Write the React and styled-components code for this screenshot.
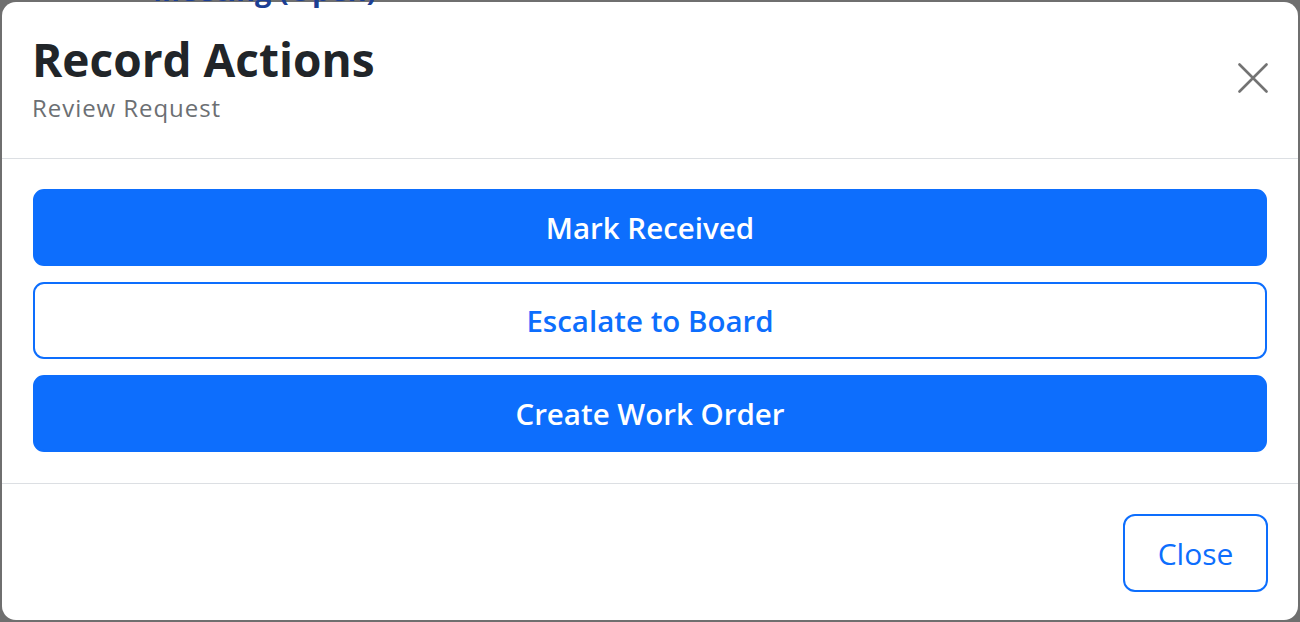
import React from "react";
import styled, { createGlobalStyle } from "styled-components";

const Global = createGlobalStyle`
  html, body { margin: 0; padding: 0; }
  body {
    font-family: "Open Sans", "Noto Sans", sans-serif;
    background: #6f6f6f;
    overflow: hidden;
  }
  * { box-sizing: border-box; }
`;

const Backdrop = styled.div`
  position: relative;
  width: 1300px;
  height: 622px;
  padding: 2px;
  background: #6f6f6f;
`;

const Behind = styled.div`
  position: absolute;
  top: -30px;
  left: 153px;
  font-size: 29px;
  font-weight: 700;
  color: #1c3f94;
  z-index: 2;
  white-space: nowrap;
`;

const Modal = styled.div`
  height: 618px;
  background: #fff;
  border-radius: 14px;
  display: flex;
  flex-direction: column;
  overflow: hidden;
`;

const Header = styled.div`
  height: 157px;
  padding: 29.5px 30px 0 30px;
  border-bottom: 1px solid #dcdfe3;
  display: flex;
  align-items: flex-start;
  justify-content: space-between;
`;

const Titles = styled.div`
  display: flex;
  flex-direction: column;
`;

const Title = styled.h1`
  margin: 0;
  font-size: 46px;
  line-height: 55.2px;
  font-weight: 700;
  color: #212529;
`;

const Subtitle = styled.div`
  font-size: 24px;
  line-height: 30px;
  letter-spacing: 0.95px;
  color: #6c6f73;
  margin-top: 6px;
`;

const CloseX = styled.button`
  border: none;
  background: transparent;
  padding: 0;
  width: 30px;
  height: 30px;
  margin-top: 31.5px;
  display: flex;
  cursor: pointer;
`;

const Body = styled.div`
  padding: 30px 31px 31px 31px;
  border-bottom: 1px solid #dcdfe3;
  display: flex;
  flex-direction: column;
  gap: 16px;
`;

const ActionButton = styled.button`
  height: 77px;
  width: 100%;
  border-radius: 11px;
  border: 2px solid #0d6efd;
  background: ${(p) => (p.$outline ? "#fff" : "#0d6efd")};
  color: ${(p) => (p.$outline ? "#0d6efd" : "#fff")};
  font-family: "Open Sans", sans-serif;
  font-size: 29.5px;
  font-weight: 600;
  cursor: pointer;
`;

const Footer = styled.div`
  flex: 1;
  padding: 30px 30px 0 30px;
  display: flex;
  justify-content: flex-end;
  align-items: flex-start;
`;

const CloseButton = styled.button`
  width: 145px;
  height: 78px;
  border-radius: 12px;
  border: 2px solid #0d6efd;
  background: #fff;
  color: #0d6efd;
  font-family: "Open Sans", sans-serif;
  font-size: 30px;
  font-weight: 400;
  cursor: pointer;
`;

export default function App() {
  return (
    <>
      <Global />
      <Backdrop>
        <Behind>Meeting (Open)</Behind>
        <Modal>
          <Header>
            <Titles>
              <Title>Record Actions</Title>
              <Subtitle>Review Request</Subtitle>
            </Titles>
            <CloseX aria-label="Close">
              <svg width="30" height="30" viewBox="0 0 30 30">
                <path
                  d="M1.5 1.5 L28.5 28.5 M28.5 1.5 L1.5 28.5"
                  stroke="#737373"
                  strokeWidth="2.6"
                  strokeLinecap="round"
                  fill="none"
                />
              </svg>
            </CloseX>
          </Header>
          <Body>
            <ActionButton>Mark Received</ActionButton>
            <ActionButton $outline>Escalate to Board</ActionButton>
            <ActionButton>Create Work Order</ActionButton>
          </Body>
          <Footer>
            <CloseButton>Close</CloseButton>
          </Footer>
        </Modal>
      </Backdrop>
    </>
  );
}
